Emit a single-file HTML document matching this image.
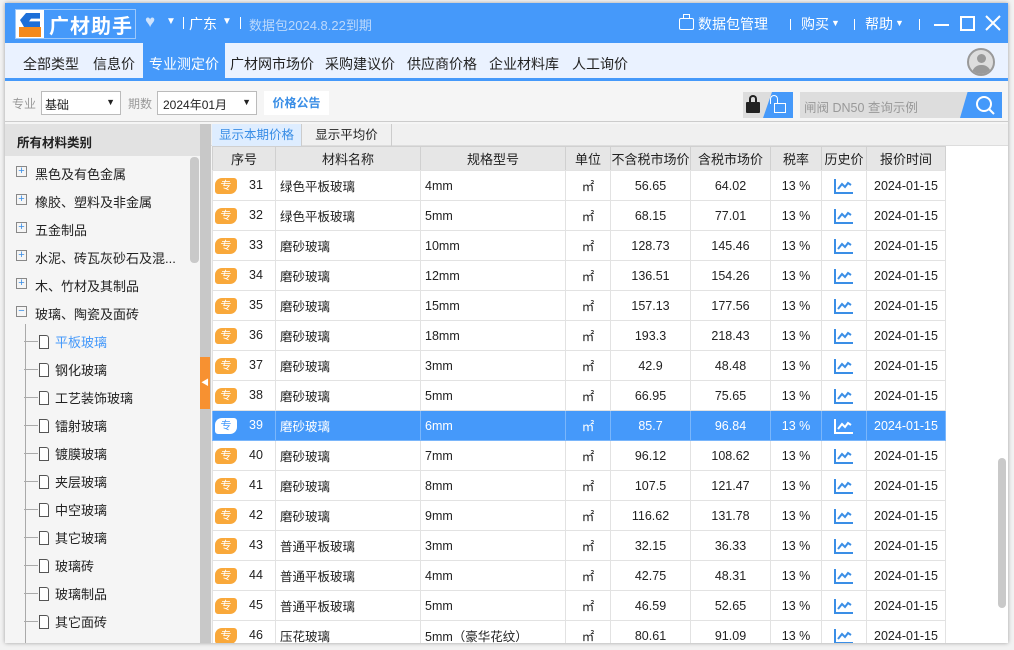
<!DOCTYPE html><html><head><meta charset="utf-8"><style>
*{margin:0;padding:0;box-sizing:border-box}
body{width:1014px;height:650px;overflow:hidden;background:#f2f2f2;font-family:"Liberation Sans","Noto Sans CJK SC",sans-serif;font-size:13px;color:#222;position:relative}
.a{position:absolute}
#win{left:5px;top:3px;width:1003px;height:640px;background:#f5f5f5;box-shadow:0 0 4px rgba(0,0,0,.35);overflow:hidden}
.top{left:0;top:0;width:1003px;height:40px;background:#4599fa;color:#fff}
.nav{left:0;top:40px;width:1003px;height:38px;background:#eaf2ff;border-bottom:3px solid #4599fa}
.nav span{position:absolute;top:11px;font-size:14px;color:#222}
.tb{left:0;top:81px;width:1003px;height:38px;background:#f5f5f5;border-bottom:1px solid #ccc}
.side{left:0;top:121px;width:195px;height:520px;background:#f5f5f5}
.side .it{position:absolute;left:30px;font-size:13px}
.pl{position:absolute;left:11px;width:11px;height:11px;border:1px solid #888;color:#3a8ee6;font-size:11px;line-height:9px;text-align:center}
.leaf{position:absolute;left:50px;font-size:13px}
.leaf:before{content:"";position:absolute;left-:0;left:-16px;top:3px;width:8px;height:12px;border:1px solid #555;border-radius:0 3px 0 0;background:#fff}
.leaf:after{content:"";position:absolute;left:-31px;top:9px;width:14px;border-top:1px solid #aaa}
table{border-collapse:collapse;position:absolute;left:207px;top:143px;table-layout:fixed}
td,th{height:30px;border:1px solid #e2e2e2;font-size:12.5px;font-weight:normal;text-align:center;white-space:nowrap;background:#fff}
th{height:24px;background:#e6e6e6;border-color:#d0d0d0;font-size:13px}
td.l{text-align:left;padding-left:4px}
.tag{display:inline-block;width:22px;height:16px;background:#f9a83a;color:#fff;border-radius:7px 3px 7px 3px;font-size:11px;line-height:16px;text-align:center;float:left;margin-left:2px}
tr.sel td{background:#4599fa;color:#fff;border-color:#7ab6fb}
tr.sel .tag{background:#fff;color:#4599fa}
.ch{display:inline-block;vertical-align:middle}
</style></head><body>
<div id="win" class="a">
<div class="a top">
 <div class="a" style="left:10px;top:6px;width:121px;height:30px;border:1px solid #9cc8fb;background:#4599fa"></div>
 <div class="a" style="left:11px;top:7px;width:28px;height:28px;background:#fff"></div>
 <div class="a" style="left:14px;top:24px;width:22px;height:10px;background:#f48a1d"></div>
 <div class="a" style="left:15px;top:10px;width:20px;height:14px;background:#1d6fd8;clip-path:polygon(30% 0,100% 0,100% 40%,55% 40%,45% 60%,100% 60%,100% 100%,20% 100%,0 50%)"></div>
 <div class="a" style="left:44px;top:7px;font-size:20px;font-weight:bold;letter-spacing:1px">广材助手</div>
 <div class="a" style="left:140px;top:9px;font-size:17px;color:#cfe3fc">♥</div>
 <div class="a" style="left:161px;top:13px;font-size:10px">▼</div>
 <div class="a" style="left:178px;top:14px;width:1px;height:12px;background:#fff"></div>
 <div class="a" style="left:184px;top:11px;font-size:14px">广东</div>
 <div class="a" style="left:217px;top:13px;font-size:10px">▼</div>
 <div class="a" style="left:235px;top:14px;width:1px;height:12px;background:#fff"></div>
 <div class="a" style="left:244px;top:12px;font-size:13px;color:#bcd9fc">数据包2024.8.22到期</div>
 <div class="a" style="left:674px;top:15px;width:15px;height:12px;border:1.5px solid #fff;border-radius:2px"></div>
 <div class="a" style="left:678px;top:11px;width:7px;height:5px;border:1.5px solid #fff;border-bottom:none"></div>
 <div class="a" style="left:693px;top:11px;font-size:14px">数据包管理</div>
 <div class="a" style="left:785px;top:16px;width:1px;height:11px;background:#fff"></div>
 <div class="a" style="left:796px;top:11px;font-size:14px">购买</div>
 <div class="a" style="left:826px;top:15px;font-size:9px">▼</div>
 <div class="a" style="left:849px;top:16px;width:1px;height:11px;background:#fff"></div>
 <div class="a" style="left:860px;top:11px;font-size:14px">帮助</div>
 <div class="a" style="left:890px;top:15px;font-size:9px">▼</div>
 <div class="a" style="left:914px;top:16px;width:1px;height:11px;background:#fff"></div>
 <div class="a" style="left:929px;top:21px;width:15px;height:2px;background:#fff"></div>
 <div class="a" style="left:955px;top:13px;width:15px;height:15px;border:2px solid #fff"></div>
 <svg class="a" style="left:980px;top:12px" width="16" height="16"><path d="M1 1L15 15M15 1L1 15" stroke="#fff" stroke-width="2"/></svg>
</div>
<div class="a nav">
 <span style="left:18px">全部类型</span><span style="left:88px">信息价</span>
 <div class="a" style="left:138px;top:0;width:82px;height:38px;background:#4599fa"></div>
 <span style="left:144px;color:#fff">专业测定价</span>
 <span style="left:225px">广材网市场价</span><span style="left:320px">采购建议价</span><span style="left:402px">供应商价格</span><span style="left:484px">企业材料库</span><span style="left:567px">人工询价</span>
 <div class="a" style="left:962px;top:5px;width:28px;height:28px;border-radius:50%;border:2px solid #999;background:#ddd;overflow:hidden">
  <div class="a" style="left:8px;top:4px;width:9px;height:9px;border-radius:50%;background:#999"></div>
  <div class="a" style="left:3px;top:15px;width:19px;height:12px;border-radius:9px 9px 0 0;background:#999"></div></div>
</div>
<div class="a tb">
 <div class="a" style="left:7px;top:11px;color:#999;font-size:12px">专业</div>
 <div class="a" style="left:36px;top:7px;width:80px;height:24px;border:1px solid #bbb;background:#fff;padding:4px 3px;font-size:12px">基础<span style="position:absolute;right:5px;top:5px;font-size:9px">▼</span></div>
 <div class="a" style="left:123px;top:11px;color:#999;font-size:12px">期数</div>
 <div class="a" style="left:152px;top:7px;width:100px;height:24px;border:1px solid #bbb;background:#fff;padding:4px 5px;font-size:12px">2024年01月<span style="position:absolute;right:5px;top:5px;font-size:9px">▼</span></div>
 <div class="a" style="left:259px;top:7px;width:65px;height:24px;background:#fff;color:#3a8ee6;font-weight:bold;font-size:12px;text-align:center;line-height:24px">价格公告</div>
 <div class="a" style="left:738px;top:8px;width:50px;height:26px;background:#ddd"></div>
 <div class="a" style="left:758px;top:8px;width:30px;height:26px;background:#4599fa;clip-path:polygon(30% 0,100% 0,100% 100%,0 100%)"></div>
 <div class="a" style="left:741px;top:18px;width:14px;height:11px;background:#222;border-radius:1px"></div>
 <div class="a" style="left:744px;top:11px;width:8px;height:9px;border:2px solid #222;border-bottom:none;border-radius:4px 4px 0 0"></div>
 <div class="a" style="left:769px;top:19px;width:12px;height:10px;border:1.5px solid #fff"></div>
 <div class="a" style="left:765px;top:11px;width:8px;height:9px;border:1.5px solid #fff;border-bottom:none;border-radius:4px 4px 0 0"></div>
 <div class="a" style="left:795px;top:8px;width:202px;height:26px;background:#ddd;color:#999;padding:5px 4px;font-size:12.5px">闸阀 DN50 查询示例</div>
 <div class="a" style="left:955px;top:8px;width:42px;height:26px;background:#4599fa;clip-path:polygon(18% 0,100% 0,100% 100%,0 100%)"></div>
 <svg class="a" style="left:970px;top:11px" width="22" height="20"><circle cx="9" cy="9" r="7" stroke="#fff" stroke-width="2" fill="none"/><path d="M14 14L19 19" stroke="#fff" stroke-width="2"/></svg>
</div>
<div class="a side">
 <div class="a" style="left:0;top:0;width:195px;height:32px;background:#e2e2e2;padding:8px 12px;font-weight:bold;font-size:12.5px">所有材料类别</div>
 <div class="a" style="left:185px;top:33px;width:9px;height:106px;background:#c9c9c9;border-radius:4px"></div>
 <div class="a" style="left:20px;top:200px;height:320px;border-left:1px solid #aaa"></div>
 <span class="pl" style="top:42px">+</span><span class="it" style="top:40px">黑色及有色金属</span>
 <span class="pl" style="top:70px">+</span><span class="it" style="top:68px">橡胶、塑料及非金属</span>
 <span class="pl" style="top:98px">+</span><span class="it" style="top:96px">五金制品</span>
 <span class="pl" style="top:126px">+</span><span class="it" style="top:124px">水泥、砖瓦灰砂石及混...</span>
 <span class="pl" style="top:154px">+</span><span class="it" style="top:152px">木、竹材及其制品</span>
 <span class="pl" style="top:182px">−</span><span class="it" style="top:180px">玻璃、陶瓷及面砖</span>
 <span class="leaf" style="top:208px;color:#4599fa">平板玻璃</span>
 <span class="leaf" style="top:236px">钢化玻璃</span>
 <span class="leaf" style="top:264px">工艺装饰玻璃</span>
 <span class="leaf" style="top:292px">镭射玻璃</span>
 <span class="leaf" style="top:320px">镀膜玻璃</span>
 <span class="leaf" style="top:348px">夹层玻璃</span>
 <span class="leaf" style="top:376px">中空玻璃</span>
 <span class="leaf" style="top:404px">其它玻璃</span>
 <span class="leaf" style="top:432px">玻璃砖</span>
 <span class="leaf" style="top:460px">玻璃制品</span>
 <span class="leaf" style="top:488px">其它面砖</span>
 <span class="leaf" style="top:516px">玻璃锦</span>
</div>
<div class="a" style="left:195px;top:121px;width:11px;height:520px;background:#c8c8c8"></div>
<div class="a" style="left:195px;top:354px;width:10px;height:52px;background:#f79131;color:#fff;font-size:8px;line-height:52px;text-align:center">◀</div>
<div class="a" style="left:206px;top:121px;width:797px;height:22px;background:#f0f0f0;border-bottom:1px solid #ddd"></div>
<div class="a" style="left:207px;top:121px;width:90px;height:22px;background:#deedff;color:#3a8ee6;font-size:12.5px;text-align:center;line-height:22px;border-right:1px solid #ccc">显示本期价格</div>
<div class="a" style="left:297px;top:121px;width:90px;height:22px;color:#222;font-size:12.5px;text-align:center;line-height:22px;border-right:1px solid #ccc">显示平均价</div>
<div class="a" style="left:940px;top:143px;width:63px;height:500px;background:#fff"></div>
<div class="a" style="left:993px;top:455px;width:8px;height:150px;background:#c9c9c9;border-radius:4px"></div>
<table>
<colgroup><col width="63"><col width="145"><col width="145"><col width="45"><col width="80"><col width="80"><col width="51"><col width="45"><col width="79"></colgroup>
<tr><th>序号</th><th>材料名称</th><th>规格型号</th><th>单位</th><th>不含税市场价</th><th>含税市场价</th><th>税率</th><th>历史价</th><th>报价时间</th></tr>
</table>
<table style="top:167px" id="t"></table>
</div>
<script>
var d=[[31,"绿色平板玻璃","4mm","56.65","64.02"],[32,"绿色平板玻璃","5mm","68.15","77.01"],[33,"磨砂玻璃","10mm","128.73","145.46"],[34,"磨砂玻璃","12mm","136.51","154.26"],[35,"磨砂玻璃","15mm","157.13","177.56"],[36,"磨砂玻璃","18mm","193.3","218.43"],[37,"磨砂玻璃","3mm","42.9","48.48"],[38,"磨砂玻璃","5mm","66.95","75.65"],[39,"磨砂玻璃","6mm","85.7","96.84"],[40,"磨砂玻璃","7mm","96.12","108.62"],[41,"磨砂玻璃","8mm","107.5","121.47"],[42,"磨砂玻璃","9mm","116.62","131.78"],[43,"普通平板玻璃","3mm","32.15","36.33"],[44,"普通平板玻璃","4mm","42.75","48.31"],[45,"普通平板玻璃","5mm","46.59","52.65"],[46,"压花玻璃","5mm（豪华花纹）","80.61","91.09"]];
var h='<colgroup><col width="63"><col width="145"><col width="145"><col width="45"><col width="80"><col width="80"><col width="51"><col width="45"><col width="79"></colgroup>';
d.forEach(function(r){var s=r[0]==39;var c=s?'#fff':'#3a8ee6';
h+='<tr'+(s?' class="sel"':'')+'><td><span class="tag">专</span>'+r[0]+'</td><td class="l">'+r[1]+'</td><td class="l">'+r[2]+'</td><td>㎡</td><td>'+r[3]+'</td><td>'+r[4]+'</td><td>13 %</td><td><svg class="ch" width="20" height="16"><path d="M1 1V15H19" stroke="'+c+'" stroke-width="2" fill="none"/><path d="M4 11L8 6L11 9L14 5L17 7" stroke="'+c+'" stroke-width="2" fill="none"/></svg></td><td>2024-01-15</td></tr>';});
document.getElementById('t').innerHTML=h;
</script>
</body></html>
